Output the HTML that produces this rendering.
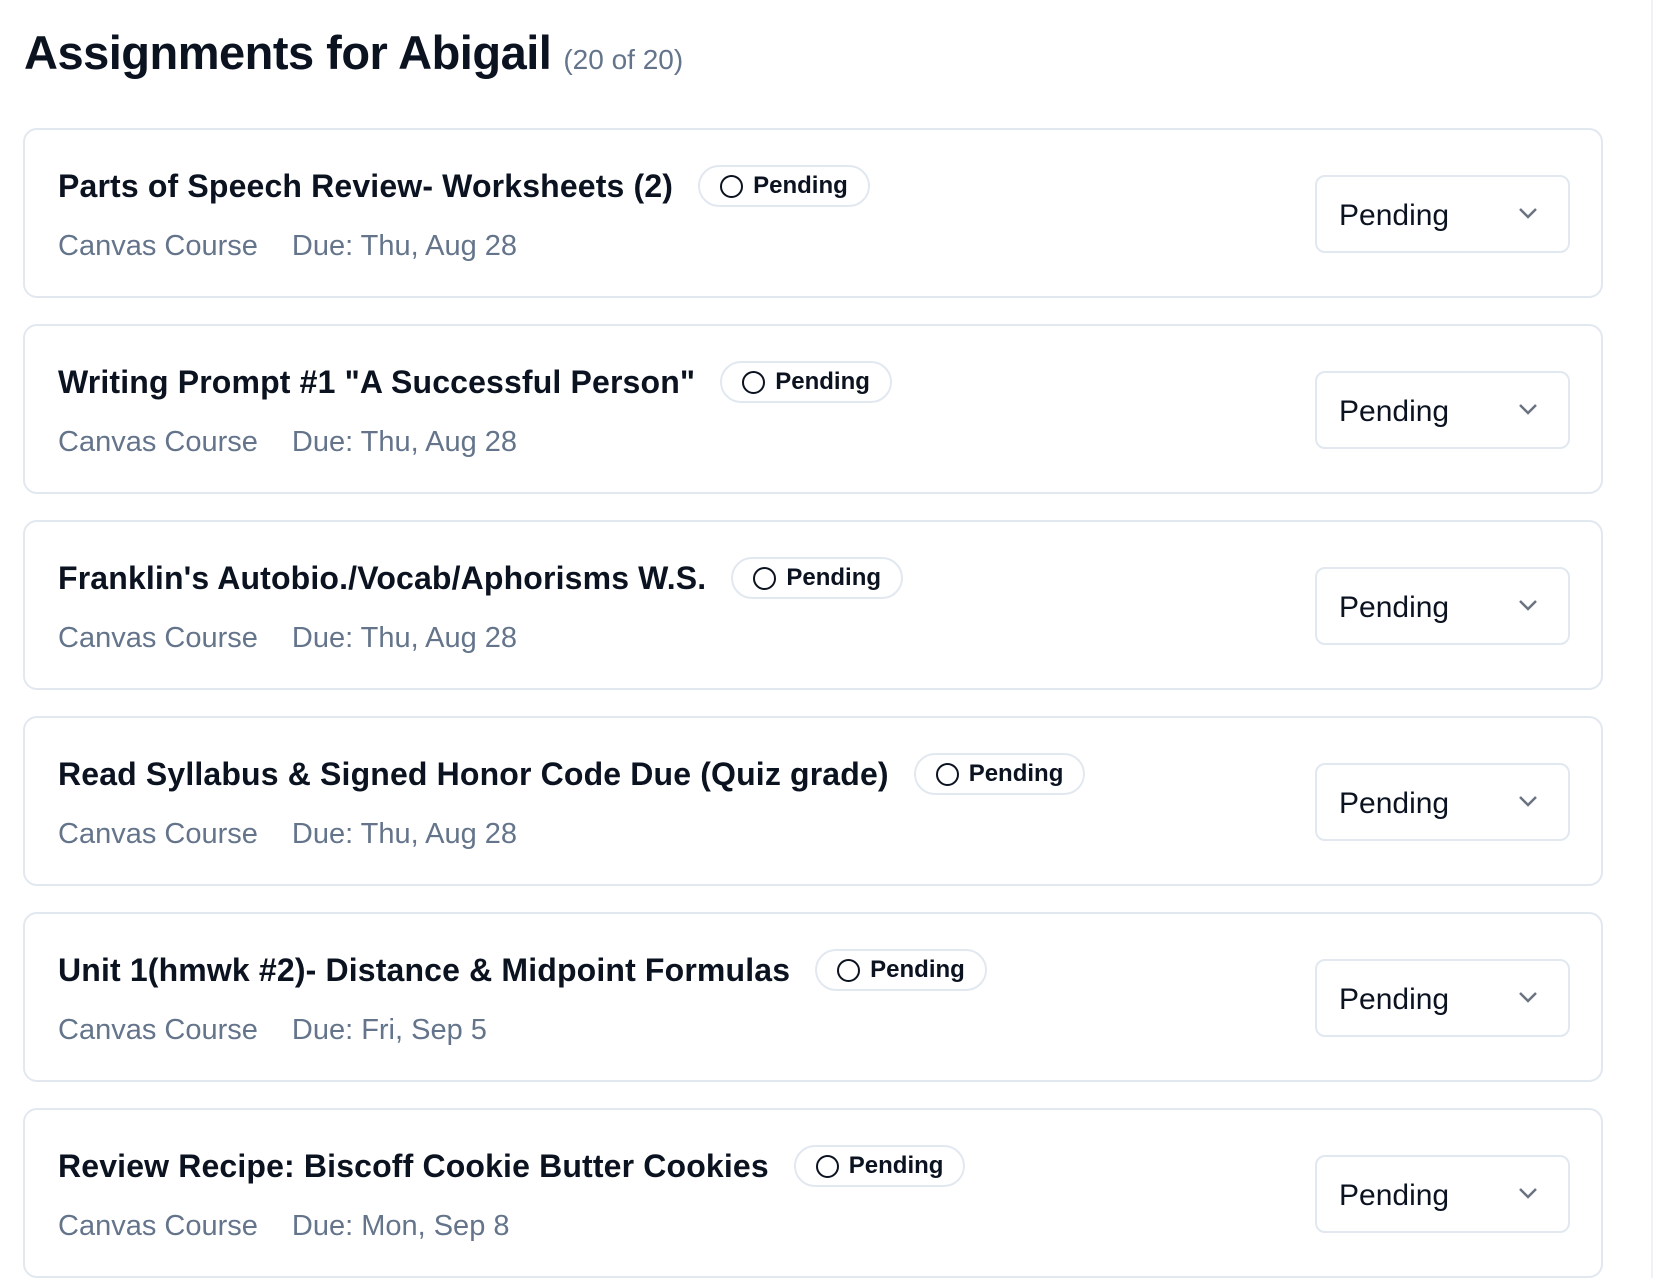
<!DOCTYPE html>
<html><head><meta charset="utf-8"><style>
*{box-sizing:border-box;margin:0;padding:0}
body{width:1656px;height:1278px;overflow:hidden;background:#fff;font-family:"Liberation Sans",sans-serif;color:#0b1220;position:relative}
.vline{position:absolute;left:1651px;top:0;width:2px;height:1278px;background:#eef1f5}
h1{position:absolute;left:24px;top:25px;font-size:47px;font-weight:700;letter-spacing:-0.5px;white-space:nowrap}
h1 span{font-size:28px;font-weight:400;color:#64748b;letter-spacing:0;margin-left:12px}
.card{position:absolute;left:23px;width:1580px;height:170px;border:2px solid #e2e8f0;border-radius:14px;background:#fff}
.row{position:absolute;left:33px;top:35px;display:flex;align-items:center;white-space:nowrap}
.t{font-size:32px;font-weight:700;letter-spacing:0.15px}
.badge{margin-left:25px;height:42px;border:2px solid #e2e8f0;border-radius:21px;display:flex;align-items:center;padding:0 20px 0 20px;font-size:24px;font-weight:700}
.badge i{display:inline-block;width:23px;height:23px;border:2px solid #0b1220;border-radius:50%;margin-right:10px}
.sub{position:absolute;left:33px;top:100px;font-size:29px;color:#64748b;white-space:nowrap}
.sub b{font-weight:400;margin-left:34px}
.sel{position:absolute;left:1290px;top:45px;width:255px;height:78px;border:2px solid #e2e8f0;border-radius:10px;font-size:30px;padding:22px 0 0 22px}
.sel svg{position:absolute;right:30px;top:30px}
</style></head><body>
<div class="vline"></div>
<h1>Assignments for Abigail<span>(20 of 20)</span></h1>

<div class="card" style="top:128px"><div class="row"><span class="t">Parts of Speech Review- Worksheets (2)</span><span class="badge"><i></i>Pending</span></div><div class="sub">Canvas Course<b>Due: Thu, Aug 28</b></div><div class="sel">Pending<svg width="20" height="12" viewBox="0 0 20 12"><path d="M2 2l8 8 8-8" fill="none" stroke="#6b7280" stroke-width="2.5"/></svg></div></div>

<div class="card" style="top:324px"><div class="row"><span class="t">Writing Prompt #1 "A Successful Person"</span><span class="badge"><i></i>Pending</span></div><div class="sub">Canvas Course<b>Due: Thu, Aug 28</b></div><div class="sel">Pending<svg width="20" height="12" viewBox="0 0 20 12"><path d="M2 2l8 8 8-8" fill="none" stroke="#6b7280" stroke-width="2.5"/></svg></div></div>

<div class="card" style="top:520px"><div class="row"><span class="t">Franklin's Autobio./Vocab/Aphorisms W.S.</span><span class="badge"><i></i>Pending</span></div><div class="sub">Canvas Course<b>Due: Thu, Aug 28</b></div><div class="sel">Pending<svg width="20" height="12" viewBox="0 0 20 12"><path d="M2 2l8 8 8-8" fill="none" stroke="#6b7280" stroke-width="2.5"/></svg></div></div>

<div class="card" style="top:716px"><div class="row"><span class="t">Read Syllabus &amp; Signed Honor Code Due (Quiz grade)</span><span class="badge"><i></i>Pending</span></div><div class="sub">Canvas Course<b>Due: Thu, Aug 28</b></div><div class="sel">Pending<svg width="20" height="12" viewBox="0 0 20 12"><path d="M2 2l8 8 8-8" fill="none" stroke="#6b7280" stroke-width="2.5"/></svg></div></div>

<div class="card" style="top:912px"><div class="row"><span class="t">Unit 1(hmwk #2)- Distance &amp; Midpoint Formulas</span><span class="badge"><i></i>Pending</span></div><div class="sub">Canvas Course<b>Due: Fri, Sep 5</b></div><div class="sel">Pending<svg width="20" height="12" viewBox="0 0 20 12"><path d="M2 2l8 8 8-8" fill="none" stroke="#6b7280" stroke-width="2.5"/></svg></div></div>

<div class="card" style="top:1108px"><div class="row"><span class="t">Review Recipe: Biscoff Cookie Butter Cookies</span><span class="badge"><i></i>Pending</span></div><div class="sub">Canvas Course<b>Due: Mon, Sep 8</b></div><div class="sel">Pending<svg width="20" height="12" viewBox="0 0 20 12"><path d="M2 2l8 8 8-8" fill="none" stroke="#6b7280" stroke-width="2.5"/></svg></div></div>
</body></html>
